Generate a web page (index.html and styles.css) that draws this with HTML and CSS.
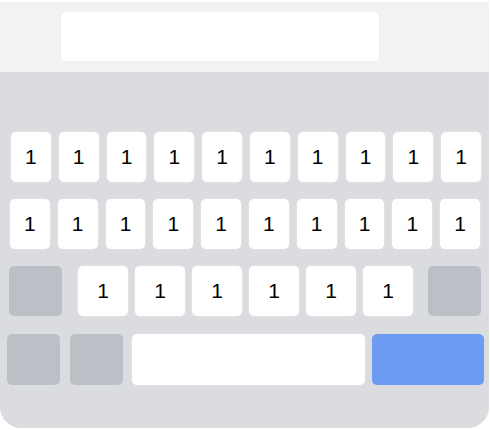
FILE: index.html
```html
<!DOCTYPE html>
<html>
<head>
<meta charset="utf-8">
<link rel="stylesheet" href="styles.css">
</head>
<body>
<div class="app">
  <div class="header">
    <div class="input"></div>
  </div>
  <div class="keyboard">
    <div class="row row-a">
      <div class="key">1</div><div class="key">1</div><div class="key">1</div><div class="key">1</div><div class="key">1</div>
      <div class="key">1</div><div class="key">1</div><div class="key">1</div><div class="key">1</div><div class="key">1</div>
    </div>
    <div class="row row-b">
      <div class="key">1</div><div class="key">1</div><div class="key">1</div><div class="key">1</div><div class="key">1</div>
      <div class="key">1</div><div class="key">1</div><div class="key">1</div><div class="key">1</div><div class="key">1</div>
    </div>
    <div class="row row-c">
      <div class="key fn"></div>
      <div class="letters">
        <div class="key">1</div><div class="key">1</div><div class="key">1</div><div class="key">1</div><div class="key">1</div><div class="key">1</div>
      </div>
      <div class="key fn"></div>
    </div>
    <div class="row row-d">
      <div class="key fn"></div>
      <div class="key fn second"></div>
      <div class="key space"></div>
      <div class="key go"></div>
    </div>
  </div>
</div>
</body>
</html>
```
FILE: styles.css
```css
html, body {
  margin: 0;
  padding: 0;
  background: #ffffff;
}
.app {
  width: 489px;
  margin-top: 2px;
  font-family: "Liberation Sans", Arial, sans-serif;
}
.header {
  background: #f2f2f2;
  height: 70px;
  padding: 10px 0 0 61px;
  box-sizing: border-box;
}
.input {
  width: 318px;
  height: 49px;
  background: #ffffff;
  border-radius: 5px;
}
.keyboard {
  background: #dbdce0;
  height: 356px;
  box-sizing: border-box;
  padding-top: 60px;
  border-radius: 0 0 21px 21px;
  display: flex;
  flex-direction: column;
  gap: 17px;
}
.row {
  display: flex;
  height: 50px;
}
.key {
  background: #ffffff;
  border-radius: 5px;
  display: flex;
  align-items: center;
  justify-content: center;
  font-size: 21px;
  color: #000000;
  box-shadow: 0 0 0 0.5px #e6e7ea;
}
.row-a {
  padding: 0 8px 0 11px;
  gap: 8px;
}
.row-b {
  padding: 0 9px 0 10px;
  gap: 8px;
}
.row-a .key, .row-b .key {
  flex: 1;
}
.row-c {
  padding-left: 9px;
  margin-bottom: 1px;
}
.row-c .fn {
  width: 53px;
}
.letters {
  display: flex;
  gap: 7px;
  margin: 0 15px 0 16px;
}
.letters .key {
  width: 50px;
}
.fn {
  background: #bbc0c7;
  box-shadow: none;
}
.row-d {
  padding-left: 7px;
  height: 51px;
}
.row-d .fn {
  width: 53px;
}
.row-d .second {
  margin-left: 10px;
}
.space {
  width: 233px;
  margin-left: 9px;
}
.go {
  width: 112px;
  margin-left: 7px;
  background: #6c9cf1;
  box-shadow: none;
}
```
